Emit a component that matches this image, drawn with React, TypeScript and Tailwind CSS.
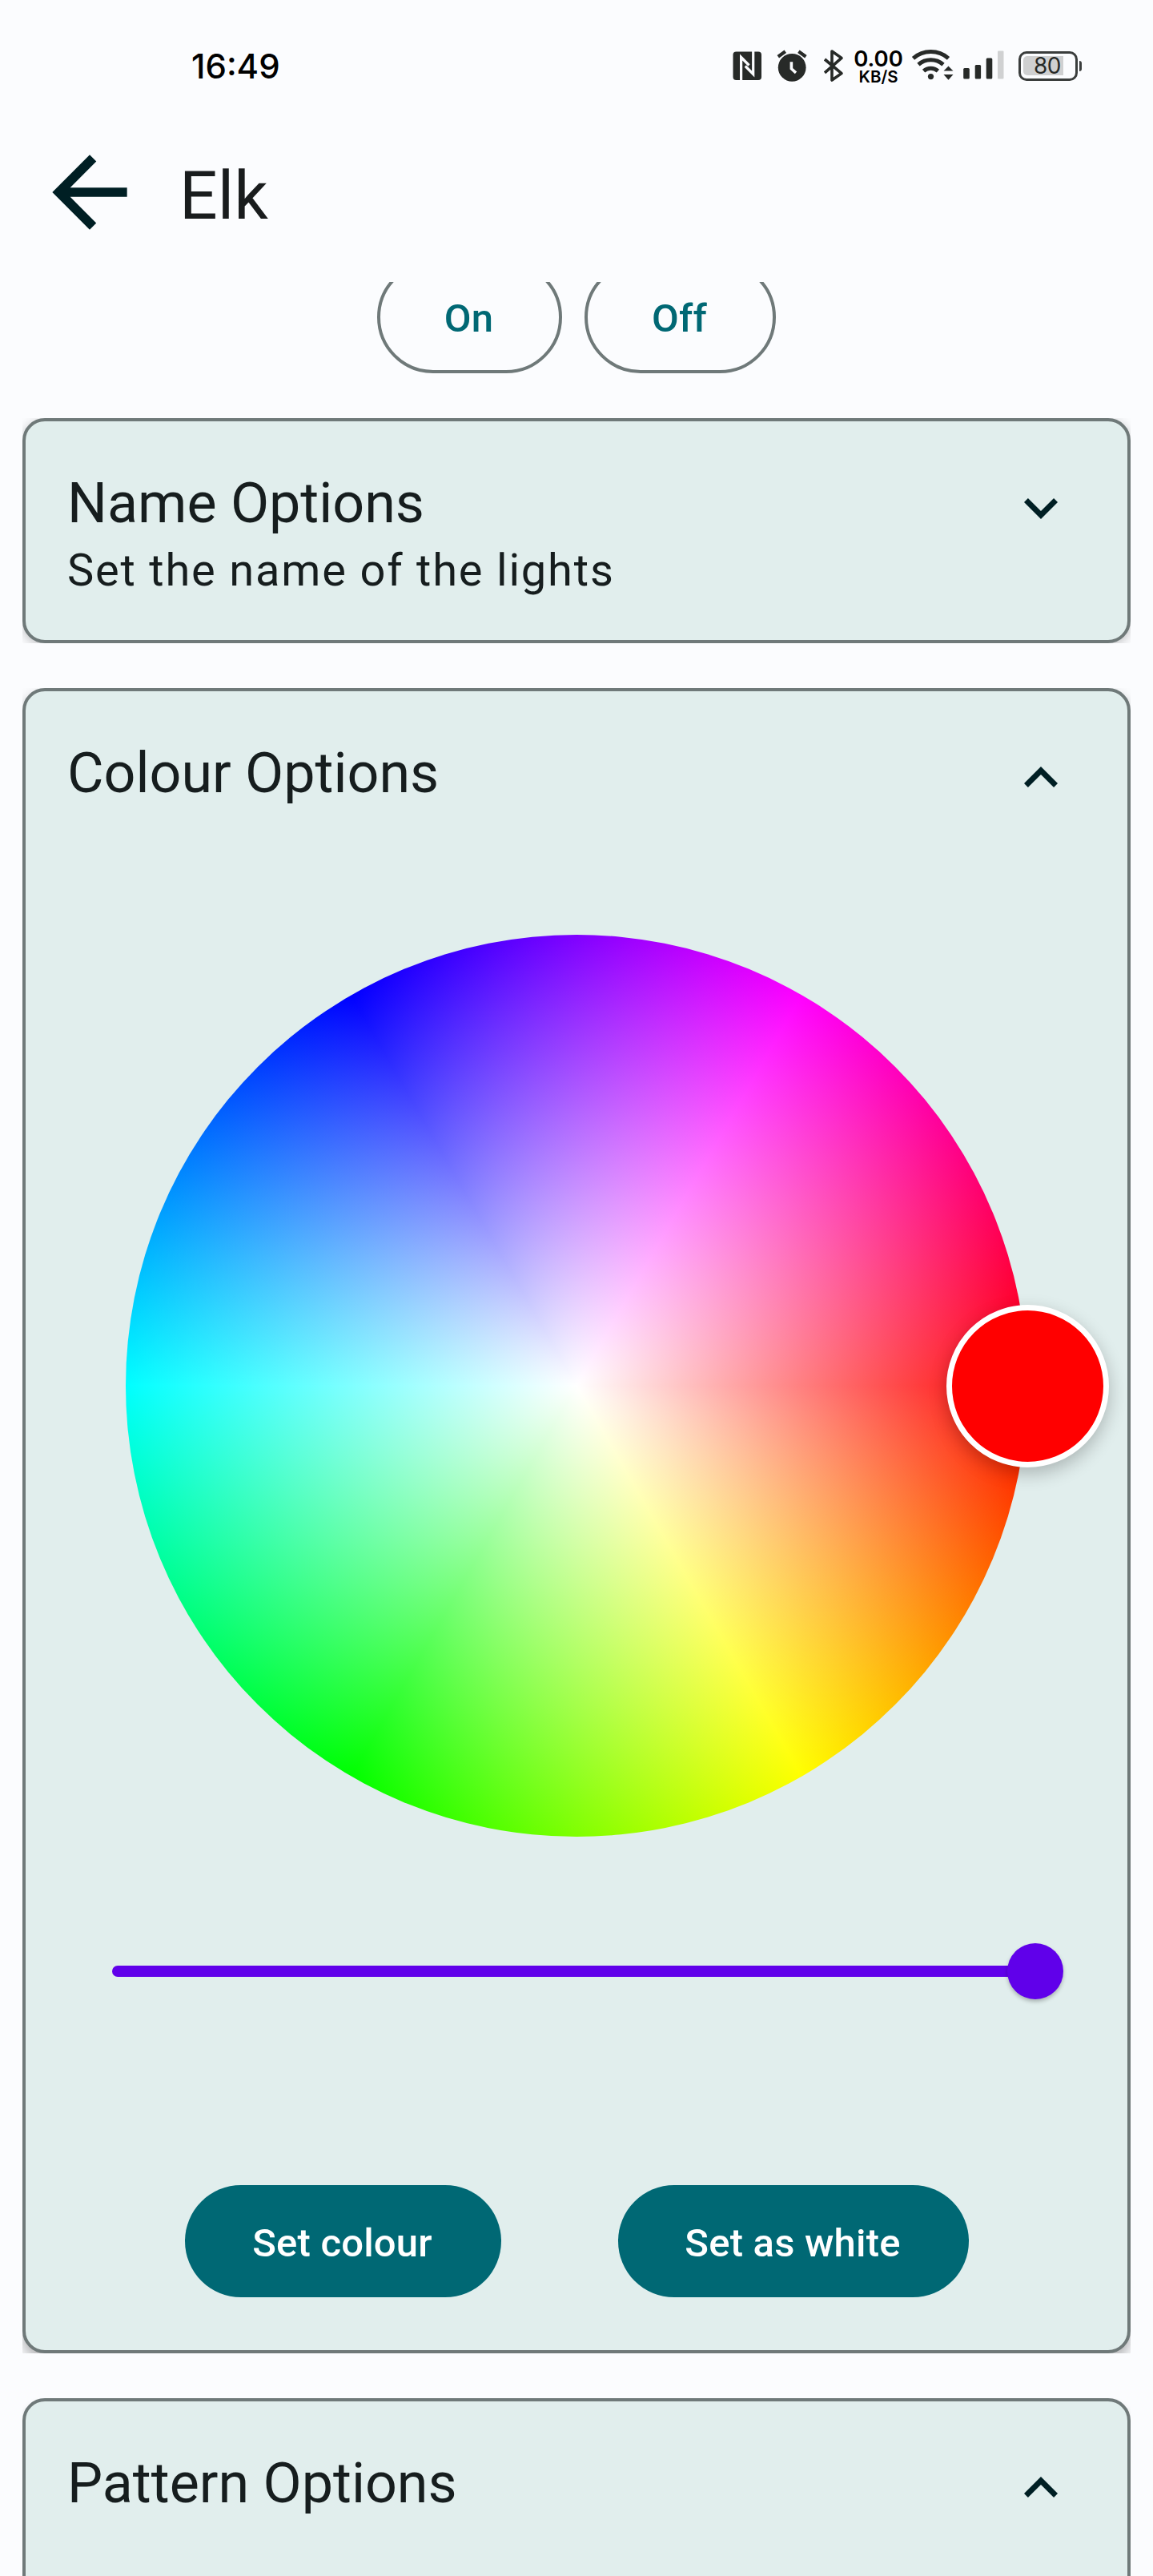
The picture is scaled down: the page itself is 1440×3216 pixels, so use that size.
import type { ReactNode } from "react";

const ROBOTO = "font-['Roboto',sans-serif]";

function NfcIcon() {
  return (
    <svg className="h-12 w-9" viewBox="915 59 36 48" fill="none">
      <rect x="915.5" y="65.5" width="35.5" height="35.5" rx="4" fill="#272a28" />
      <path d="M925.6 101.5V72.5L935.5 82.5" stroke="#fbfcfe" strokeWidth="3.2" />
      <path d="M940.7 65V93.5L930.8 83.5" stroke="#fbfcfe" strokeWidth="3.2" />
    </svg>
  );
}

function AlarmIcon() {
  return (
    <svg className="ml-[19px] h-12 w-[38px]" viewBox="970 59 38 48" fill="none">
      <circle cx="989.2" cy="85.3" r="17.4" fill="#272a28" />
      <path d="M971.8 71.8l9-6.6M1006.4 71.8l-9-6.6" stroke="#272a28" strokeWidth="4.2" />
      <path d="M988.4 78.2v8.6l5.6 5" stroke="#fbfcfe" strokeWidth="3.6" />
    </svg>
  );
}

function BluetoothIcon() {
  return (
    <svg className="ml-5 h-12 w-[26px]" viewBox="1028 59 26 48" fill="none">
      <path
        d="M1030 75l21 17.6-12 8.4V65l12 8.4L1030 91.8"
        stroke="#272a28"
        strokeWidth="3.6"
        strokeLinejoin="round"
      />
    </svg>
  );
}

function WifiIcon() {
  return (
    <svg className="ml-[10px] h-12 w-[53px]" viewBox="1138 59 53 48" fill="none">
      <g stroke="#272a28" strokeWidth="5">
        <path d="M1140.5 73.8a33.5 33.5 0 0 1 44 0" />
        <path d="M1147 81.6a23.6 23.6 0 0 1 31 0" />
        <path d="M1153.6 89.6a13.6 13.6 0 0 1 17.8 0" />
      </g>
      <circle cx="1162.5" cy="96.6" r="3.6" fill="#272a28" />
      <path d="M1178.5 89.5l6-6 6 6zM1178.5 94l6 6.8 6-6.8z" fill="#272a28" />
    </svg>
  );
}

function SignalIcon() {
  return (
    <svg className="ml-3 h-12 w-[51px]" viewBox="1203 59 51 48" fill="#272a28">
      <rect x="1203.2" y="86" width="7.6" height="13.6" rx="1.5" />
      <rect x="1217.7" y="82" width="7.4" height="17.6" rx="1.5" />
      <rect x="1231.7" y="73.5" width="7.6" height="26" rx="1.5" />
      <rect x="1246" y="64.5" width="7.5" height="35" rx="1" fill="#d0d1d2" />
    </svg>
  );
}

function Battery() {
  return (
    <div className="ml-[18px] flex items-center">
      <div className="flex h-[37px] w-[74px] items-center rounded-[10px] border-[3px] border-[#3a3d3c] pl-[3px]">
        <div className="flex h-6 w-[50px] items-center justify-end rounded-l-[5px] bg-[#cfd0d1] pr-[3px] font-['Inter',sans-serif] text-[28px] leading-none tracking-[-0.5px] text-[#272a28]">
          80
        </div>
      </div>
      <div className="ml-[2px] h-[13px] w-[3px] rounded-r-sm bg-[#3a3d3c]" />
    </div>
  );
}

function StatusBar() {
  return (
    <div className="flex h-[164px] items-center pl-[239px] pr-[89px]">
      <span className="mt-[2px] font-['Inter',sans-serif] text-[42px] font-medium leading-none text-black">
        16:49
      </span>
      <div className="ml-auto flex items-center">
        <NfcIcon />
        <AlarmIcon />
        <BluetoothIcon />
        <div className="ml-3 mt-[3px] flex w-[62px] flex-col items-center whitespace-nowrap font-['Inter',sans-serif] text-black">
          <span className="text-[27.5px] font-semibold leading-[24px]">0.00</span>
          <span className="text-[20.5px] font-semibold leading-[22px]">KB/S</span>
        </div>
        <WifiIcon />
        <SignalIcon />
        <Battery />
      </div>
    </div>
  );
}

function TopBar() {
  return (
    <header className="flex h-[188px] items-start pl-[42px] pt-[6px]">
      <svg className="size-[140px]" viewBox="0 0 24 24" fill="#001f24">
        <path d="M20 11H7.83l5.59-5.59L12 4l-8 8 8 8 1.41-1.41L7.83 13H20v-2z" />
      </svg>
      <h1 className="ml-[42px] mt-[26px] text-[84px] leading-[98px] text-[#191c1d]">Elk</h1>
    </header>
  );
}

function OutlinedButton({ width, children }: { width: string; children: ReactNode }) {
  return (
    <button
      className={`flex h-[140px] items-center justify-center rounded-full border-4 border-[#6f7979] pr-[2px] pt-1 text-[49px] font-medium tracking-[0.25px] text-[#006874] ${width}`}
    >
      {children}
    </button>
  );
}

function FilledButton({ width, children }: { width: string; children: ReactNode }) {
  return (
    <button
      className={`flex h-[140px] items-center justify-center rounded-full bg-[#006874] pr-[2px] pt-[5px] text-[49px] font-medium tracking-[0.2px] text-white ${width}`}
    >
      {children}
    </button>
  );
}

function Chevron({ open }: { open: boolean }) {
  return (
    <svg className="mt-[66px] size-[84px]" viewBox="0 0 24 24" fill="#001f24">
      <path
        d={
          open
            ? "M12 8l-6 6 1.41 1.41L12 10.83l4.59 4.58L18 14z"
            : "M16.59 8.59L12 13.17 7.41 8.59 6 10l6 6 6-6z"
        }
      />
    </svg>
  );
}

type CardProps = {
  title: string;
  subtitle?: string;
  open: boolean;
  frame: string;
  shadow: string;
  children?: ReactNode;
};

function Card({ title, subtitle, open, frame, shadow, children }: CardProps) {
  return (
    <section className={`shrink-0 overflow-hidden ${frame}`}>
      <div className={`h-full rounded-[28px] border-4 border-[#6f7979] bg-[#e1eeed] ${shadow}`}>
        <div className="flex h-[150px] items-start justify-between pl-[52px] pr-[66px]">
          <div className="pt-[61px] text-[#161d1e]">
            <h2 className="text-[70px] leading-[82px]">{title}</h2>
            {subtitle && (
              <p className="mt-[10px] text-[56px] leading-[66px] tracking-[1.8px]">{subtitle}</p>
            )}
          </div>
          <Chevron open={open} />
        </div>
        {children}
      </div>
    </section>
  );
}

function ColourWheel() {
  return (
    <div className="relative mx-auto mt-[154px] size-[1126px] rounded-full bg-[radial-gradient(closest-side,#fff,rgba(255,255,255,0)),conic-gradient(from_90deg,#f00,#ff0,#0f0,#0ff,#00f,#f0f,#f00)]">
      <div className="absolute left-[1025px] top-[462px] size-[203px] rounded-full border-[7px] border-white bg-[#f00] shadow-[0_8px_22px_rgba(0,0,0,0.24)]" />
    </div>
  );
}

function BrightnessSlider() {
  return (
    <div className="ml-[108px] mt-[133px] flex h-[70px] w-[1188px] items-center">
      <div className="h-[14px] flex-1 rounded-l-full bg-[#6000ea]" />
      <div className="-ml-1 size-[70px] rounded-full bg-[#6000ea] shadow-[0_3px_5px_rgba(0,0,0,0.25)]" />
    </div>
  );
}

export default function App() {
  return (
    <div className={`flex h-[3216px] w-[1440px] flex-col overflow-hidden bg-[#fbfcfe] ${ROBOTO}`}>
      <StatusBar />
      <TopBar />
      <main className="flex flex-1 flex-col gap-14 overflow-hidden px-7">
        <div className="-mt-[26px] flex justify-center gap-7">
          <OutlinedButton width="w-[231px]">On</OutlinedButton>
          <OutlinedButton width="w-[239px]">Off</OutlinedButton>
        </div>
        <Card
          title="Name Options"
          subtitle="Set the name of the lights"
          open={false}
          frame="h-[281px]"
          shadow="shadow-[0_3px_14px_rgba(0,0,0,0.24)]"
        />
        <Card
          title="Colour Options"
          open
          frame="h-[2079px]"
          shadow="shadow-[0_8px_16px_rgba(0,0,0,0.3)]"
        >
          <ColourWheel />
          <BrightnessSlider />
          <div className="ml-[199px] mt-[232px] flex gap-[146px]">
            <FilledButton width="w-[395px]">Set colour</FilledButton>
            <FilledButton width="w-[438px]">Set as white</FilledButton>
          </div>
        </Card>
        <Card
          title="Pattern Options"
          open
          frame="h-[500px]"
          shadow="shadow-[0_6px_10px_rgba(0,0,0,0.16)]"
        />
      </main>
    </div>
  );
}
